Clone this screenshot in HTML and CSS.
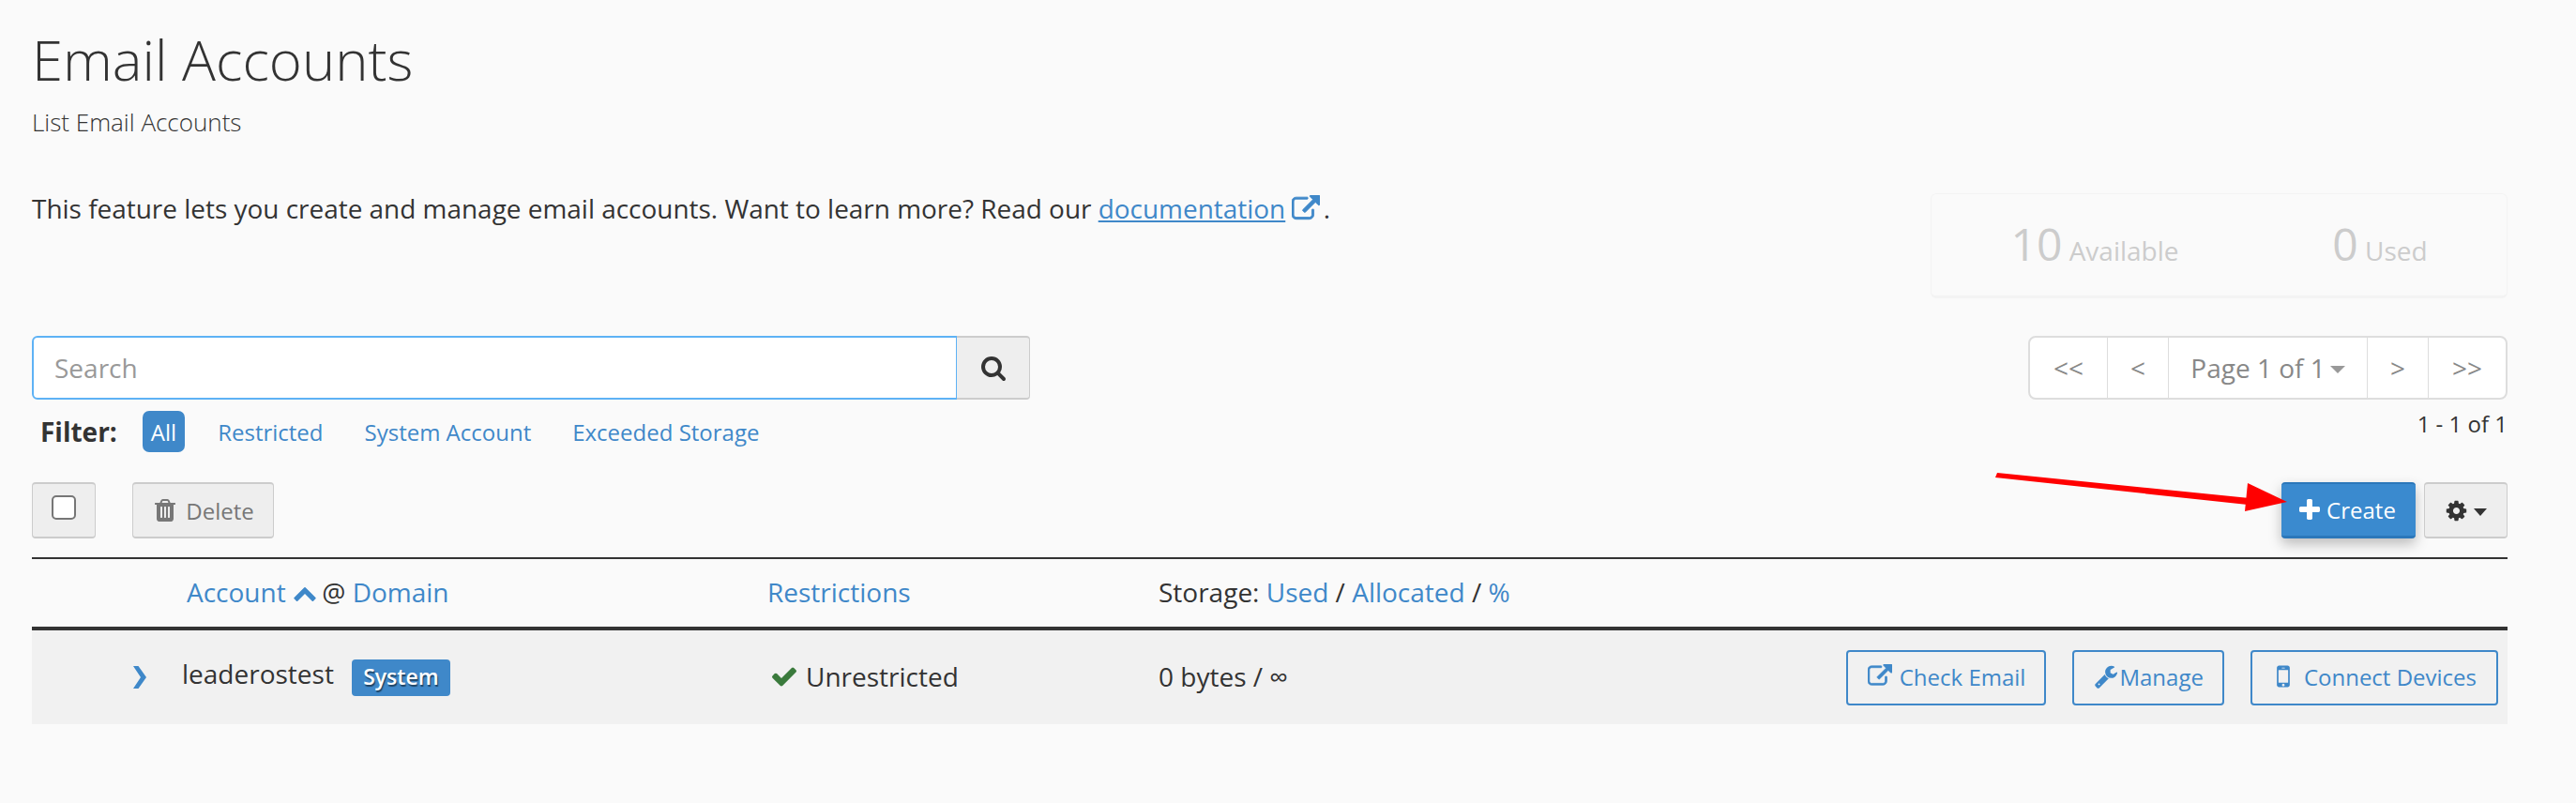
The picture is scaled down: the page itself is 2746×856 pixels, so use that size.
FILE: index.html
```html
<!doctype html>
<html>
    <head>
        <title>Email Accounts</title>
        <link rel="stylesheet" href="styles.css">
    </head>
    <body>
        <svg class="defs" width="0" height="0">
            <symbol id="i-external" viewBox="0 0 1792 1792"><path d="M1408 928v320q0 119-84.5 203.5t-203.5 84.5h-832q-119 0-203.5-84.5t-84.5-203.5v-832q0-119 84.5-203.5t203.5-84.5h704q14 0 23 9t9 23v64q0 14-9 23t-23 9h-704q-66 0-113 47t-47 113v832q0 66 47 113t113 47h832q66 0 113-47t47-113v-320q0-14 9-23t23-9h64q14 0 23 9t9 23zm384-864v512q0 26-19 45t-45 19-45-19l-176-176-652 652q-10 10-23 10t-23-10l-114-114q-10-10-10-23t10-23l652-652-176-176q-19-19-19-45t19-45 45-19h512q26 0 45 19t19 45z"/></symbol>
            <symbol id="i-search" viewBox="0 0 1792 1792"><path d="M1216 832q0-185-131.5-316.5t-316.5-131.5-316.5 131.5-131.5 316.5 131.5 316.5 316.5 131.5 316.5-131.5 131.5-316.5zm512 832q0 52-38 90t-90 38q-54 0-90-38l-343-342q-179 124-399 124-143 0-273.5-55.5t-225-150-150-225-55.5-273.5 55.5-273.5 150-225 225-150 273.5-55.5 273.5 55.5 225 150 150 225 55.5 273.5q0 220-124 399l343 343q37 37 37 90z"/></symbol>
            <symbol id="i-trash" viewBox="0 0 1792 1792"><path d="M704 1376v-704q0-14-9-23t-23-9h-64q-14 0-23 9t-9 23v704q0 14 9 23t23 9h64q14 0 23-9t9-23zm256 0v-704q0-14-9-23t-23-9h-64q-14 0-23 9t-9 23v704q0 14 9 23t23 9h64q14 0 23-9t9-23zm256 0v-704q0-14-9-23t-23-9h-64q-14 0-23 9t-9 23v704q0 14 9 23t23 9h64q14 0 23-9t9-23zm-544-992h448l-48-117q-7-9-17-11h-317q-10 2-17 11zm928 32v64q0 14-9 23t-23 9h-96v948q0 83-47 143.5t-113 60.5h-832q-66 0-113-58.5t-47-141.5v-952h-96q-14 0-23-9t-9-23v-64q0-14 9-23t23-9h309l70-167q15-37 54-63t79-26h320q40 0 79 26t54 63l70 167h309q14 0 23 9t9 23z"/></symbol>
            <symbol id="i-plus" viewBox="0 0 1792 1792"><path d="M1600 736v192q0 40-28 68t-68 28h-416v416q0 40-28 68t-68 28h-192q-40 0-68-28t-28-68v-416h-416q-40 0-68-28t-28-68v-192q0-40 28-68t68-28h416v-416q0-40 28-68t68-28h192q40 0 68 28t28 68v416h416q40 0 68 28t28 68z"/></symbol>
            <symbol id="i-cog" viewBox="0 0 1792 1792"><path d="M1152 896q0-106-75-181t-181-75-181 75-75 181 75 181 181 75 181-75 75-181zm512-109v222q0 12-8 23t-20 13l-185 28q-19 54-39 91 35 50 107 138 10 12 10 25t-9 23q-27 37-99 108t-94 71q-12 0-26-9l-138-108q-44 23-91 38-16 136-29 186-7 28-36 28h-222q-14 0-24.5-8.5t-11.5-21.5l-28-184q-49-16-90-37l-141 107q-10 9-25 9-14 0-25-11-126-114-165-168-7-10-7-23 0-12 8-23 15-21 51-66.5t54-70.5q-27-50-41-99l-183-27q-13-2-21-12.5t-8-23.5v-222q0-12 8-23t19-13l186-28q14-46 39-92-40-57-107-138-10-12-10-24 0-10 9-23 26-36 98.5-107.5t94.5-71.5q13 0 26 10l138 107q44-23 91-38 16-136 29-186 7-28 36-28h222q14 0 24.5 8.5t11.5 21.5l28 184q49 16 90 37l142-107q9-9 24-9 13 0 25 10 129 119 165 170 7 8 7 22 0 12-8 23-15 21-51 66.5t-54 70.5q26 50 41 98l183 28q13 2 21 12.5t8 23.5z"/></symbol>
            <symbol id="i-check" viewBox="0 0 1792 1792"><path d="M1671 566q0 40-28 68l-724 724-136 136q-28 28-68 28t-68-28l-136-136-362-362q-28-28-28-68t28-68l136-136q28-28 68-28t68 28l294 295 656-657q28-28 68-28t68 28l136 136q28 28 28 68z"/></symbol>
            <symbol id="i-wrench" viewBox="0 0 1792 1792"><path d="M448 1472q0-26-19-45t-45-19-45 19-19 45 19 45 45 19 45-19 19-45zm644-420l-682 682q-37 37-90 37-52 0-91-37l-106-108q-38-36-38-90 0-53 38-91l681-681q39 98 114.5 173.5t173.5 114.5zm634-435q0 39-23 106-47 134-164.5 217.5t-258.5 83.5q-185 0-316.5-131.5t-131.5-316.5 131.5-316.5 316.5-131.5q58 0 121.5 16.5t107.5 46.5q16 11 16 28t-16 28l-293 169v224l193 107q5-3 79-48.5t135.5-81 70.5-35.5q15 0 23.5 10t8.5 25z"/></symbol>
            <symbol id="i-mobile" viewBox="0 0 1792 1792"><path d="M976 1408q0-33-23.5-56.5t-56.5-23.5-56.5 23.5-23.5 56.5 23.5 56.5 56.5 23.5 56.5-23.5 23.5-56.5zm208-160v-704q0-13-9.5-22.5t-22.5-9.5h-512q-13 0-22.5 9.5t-9.5 22.5v704q0 13 9.5 22.5t22.5 9.5h512q13 0 22.5-9.5t9.5-22.5zm-192-848q0-16-16-16h-160q-16 0-16 16t16 16h160q16 0 16-16zm288-16v1024q0 52-38 90t-90 38h-512q-52 0-90-38t-38-90v-1024q0-52 38-90t90-38h512q52 0 90 38t38 90z"/></symbol>
            <symbol id="i-up" viewBox="0 0 1792 1792"><path d="M1683 1331l-166 165q-19 19-45 19t-45-19l-531-531-531 531q-19 19-45 19t-45-19l-166-165q-19-19-19-45.5t19-45.5l742-741q19-19 45-19t45 19l742 741q19 19 19 45.5t-19 45.5z"/></symbol>
            <symbol id="i-right" viewBox="0 0 16 24"><polygon points="2,0 7.5,0 16,12 7.5,24 2,24 10,12"/></symbol>
        </svg>

        <div class="page">
            <h1>Email Accounts</h1>
            <p class="subtitle">List Email Accounts</p>

            <div class="intro">
                <p class="desc">This feature lets you create and manage email accounts. Want to learn more? Read our <a href="#">documentation</a> <svg class="ico link-ico"><use href="#i-external"/></svg> .</p>
                <div class="stats">
                    <div class="stat"><b>10</b> Available</div>
                    <div class="stat"><b>0</b> Used</div>
                </div>
            </div>

            <div class="searchrow">
                <div class="search">
                    <input type="text" placeholder="Search">
                    <button class="btn searchbtn"><svg class="ico"><use href="#i-search"/></svg></button>
                </div>
                <div class="pager">
                    <span class="pg pg-first">&lt;&lt;</span>
                    <span class="pg pg-prev">&lt;</span>
                    <span class="pg pg-mid">Page 1 of 1<i class="caret"></i></span>
                    <span class="pg pg-prev">&gt;</span>
                    <span class="pg pg-first">&gt;&gt;</span>
                </div>
            </div>

            <div class="filterrow">
                <div class="filters">
                    <b>Filter:</b>
                    <a class="pill" href="#">All</a>
                    <a href="#">Restricted</a>
                    <a href="#">System Account</a>
                    <a href="#">Exceeded Storage</a>
                </div>
                <div class="count">1 - 1 of 1</div>
            </div>

            <div class="toolbar">
                <div class="tools">
                    <button class="btn checkbtn"><span class="box"></span></button>
                    <button class="btn delbtn"><svg class="ico"><use href="#i-trash"/></svg>Delete</button>
                </div>
                <div class="tools tools-right">
                    <button class="btn create"><svg class="ico"><use href="#i-plus"/></svg>Create</button>
                    <button class="btn gear"><svg class="ico"><use href="#i-cog"/></svg><i class="caret dark"></i></button>
                </div>
            </div>

            <div class="thead">
                <div></div>
                <div><a href="#">Account</a> <svg class="ico sort"><use href="#i-up"/></svg> @ <a href="#">Domain</a></div>
                <div><a href="#">Restrictions</a></div>
                <div>Storage: <a href="#">Used</a> / <a href="#">Allocated</a> / <a href="#">%</a></div>
            </div>
            <div class="trow">
                <div><svg class="ico chev"><use href="#i-right"/></svg></div>
                <div class="acct"><span class="acct-name">leaderostest</span> <span class="badge">System</span></div>
                <div class="restr"><svg class="ico ok"><use href="#i-check"/></svg>Unrestricted</div>
                <div class="usage">0 bytes / ∞</div>
                <div class="actions">
                    <a class="outline" href="#"><svg class="ico bold"><use href="#i-external"/></svg>Check Email</a>
                    <a class="outline manage" href="#"><svg class="ico"><use href="#i-wrench"/></svg>Manage</a>
                    <a class="outline connect" href="#"><svg class="ico"><use href="#i-mobile"/></svg>Connect Devices</a>
                </div>
            </div>

            <svg class="arrow" width="330" height="50" viewBox="0 0 330 50">
                <path d="M3 1 L272 28 L270 35 L1 6 Z" fill="#f00"/>
                <polygon points="270,12 312,32 267,42" fill="#f00"/>
            </svg>
        </div>
    </body>
</html>
```

FILE: styles.css
```css
*{
    margin: 0;
    padding: 0;
    box-sizing: border-box;
}
body{
    background: #fafafa;
    color: #333;
    font-family: "Open Sans", "Liberation Sans", sans-serif;
    font-size: 28px;
}
a{
    color: #3f88c9;
    text-decoration: none;
}
.defs{
    position: absolute;
}
.ico{
    width: 1em;
    height: 1em;
    fill: currentColor;
    flex: none;
}
.ico.bold{
    stroke: currentColor;
    stroke-width: 50;
}
.page{
    position: relative;
    padding: 22px 73px 0 34px;
    height: 856px;
    overflow: hidden;
}
h1{
    font-size: 59.8px;
    font-weight: 300;
    line-height: 82px;
}
.subtitle{
    font-weight: 300;
    font-size: 26px;
    line-height: 36px;
    margin-top: 8px;
}

.intro{
    display: flex;
    justify-content: space-between;
    align-items: flex-start;
    margin-top: 1px;
}
.desc{
    margin-top: 54px;
    line-height: 38px;
    font-size: 27.95px;
}
.desc a{
    text-decoration: underline;
}
.link-ico{
    width: 30px;
    height: 30px;
    color: #3f88c9;
    vertical-align: -5px;
    margin: 0 -3px 0 -1px;
    stroke: currentColor;
    stroke-width: 50;
}
.stats{
    width: 615px;
    height: 112px;
    margin-top: 57px;
    padding-left: 22px;
    padding-bottom: 4px;
    display: grid;
    grid-template-columns: 304px 304px;
    align-items: center;
    justify-items: center;
    border: 1px solid #f3f3f3;
    border-bottom-width: 3px;
    border-radius: 6px;
    color: #ccc;
    font-size: 28px;
}
.stat{
    white-space: nowrap;
}
.stat b{
    font-weight: 400;
    font-size: 48px;
}

.searchrow{
    display: flex;
    justify-content: space-between;
    margin-top: 40px;
}
.search{
    display: flex;
    height: 68px;
}
.search input{
    width: 986px;
    height: 68px;
    border: 2px solid #5eb2f5;
    border-right-width: 1px;
    border-radius: 6px 0 0 6px;
    padding: 0 22px;
    background: #fff;
    font: 400 28px "Open Sans", sans-serif;
    color: #333;
    outline: none;
}
.search input::placeholder{
    color: #999;
}
.btn{
    display: flex;
    align-items: center;
    justify-content: center;
    background: #eee;
    border: 1px solid #ccc;
    border-bottom-width: 2px;
    border-top-width: 2px;
    border-radius: 4px;
    font: 400 24px "Open Sans", sans-serif;
    color: #777;
}
.searchbtn{
    width: 78px;
    border-radius: 0 4px 4px 0;
    border-left: none;
    color: #333;
    font-size: 28px;
}
.pager{
    display: flex;
    width: 511px;
    height: 68px;
    background: #fff;
    border: 2px solid #ddd;
    border-radius: 8px;
    color: #888;
    font-size: 28px;
}
.pg{
    display: flex;
    align-items: center;
    justify-content: center;
    border-left: 1px solid #ddd;
    border-right: 1px solid #ddd;
    width: 66px;
}
.pg-first{
    width: 82px;
    border: none;
}
.pg-mid{
    flex: 1;
    border: none;
}
.caret{
    display: inline-block;
    margin-left: 5px;
    margin-top: 3px;
    border-top: 8px solid #999;
    border-left: 8px solid transparent;
    border-right: 8px solid transparent;
}
.caret.dark{
    border-top-color: #333;
    margin-left: 6px;
    border-top-width: 8px;
    border-left-width: 7px;
    border-right-width: 7px;
}

.filterrow{
    display: flex;
    justify-content: space-between;
    align-items: flex-start;
    margin-top: 12px;
    font-size: 24px;
}
.filters{
    display: flex;
    align-items: center;
    height: 44px;
    padding-left: 9px;
    gap: 35px;
}
.filters b{
    font-weight: 700;
    font-size: 28px;
    margin-right: -8px;
}
.filters a + a + a{
    margin-left: 9px;
}
.pill{
    display: flex;
    align-items: center;
    height: 44px;
    padding: 0 9px;
    border-radius: 7px;
    background: #3f88c9;
    color: #fff;
}
.count{
    line-height: 28px;
    color: #333;
}

.toolbar{
    display: flex;
    justify-content: space-between;
    align-items: flex-start;
    margin-top: 32px;
}
.tools{
    display: flex;
    gap: 39px;
}
.tools-right{
    gap: 9px;
}
.tools .btn{
    height: 60px;
}
.checkbtn{
    width: 68px;
    padding-bottom: 6px;
}
.box{
    width: 26px;
    height: 26px;
    background: #fff;
    border: 2px solid #767676;
    border-radius: 5px;
}
.delbtn{
    width: 151px;
    gap: 8px;
}
.delbtn .ico{
    width: 28px;
    height: 28px;
}
.btn.create{
    width: 143px;
    background: #3a8acf;
    color: #fff;
    gap: 4px;
    padding-right: 5px;
    border: none;
    border-top: 2px solid #2b77ba;
    border-bottom: 3px solid #2b77ba;
    box-shadow: 0 6px 14px rgba(0, 0, 0, .25);
}
.create .ico{
    width: 28px;
    height: 28px;
}
.gear{
    width: 89px;
    color: #333;
}
.gear .ico{
    width: 25px;
    height: 25px;
}

.thead, .trow{
    display: grid;
    align-items: center;
}
.thead{
    grid-template-columns: 165px 619px 417px 1fr;
    height: 78px;
    margin-top: 20px;
    padding-bottom: 2px;
    border-top: 2px solid #333;
    border-bottom: 4px solid #333;
}
.sort{
    width: 26px;
    height: 26px;
    color: #3f88c9;
    vertical-align: -3px;
    margin-right: -2px;
}
.trow{
    grid-template-columns: 160px 626px 415px 300px 1fr;
    height: 100px;
    background: #f1f1f1;
}
.chev{
    display: block;
    margin-left: 106px;
    width: 16px;
    height: 24px;
    color: #3f88c9;
}
.acct-name{
    position: relative;
    top: -3px;
}
.badge{
    display: inline-block;
    vertical-align: 2px;
    margin-left: 12px;
    padding: 0 12px;
    height: 39px;
    line-height: 37px;
    border-radius: 4px;
    background: #3f88c9;
    color: #fff;
    font-size: 23px;
    font-weight: 600;
    text-shadow: 1px 2px 1px rgba(0, 0, 0, .5);
}
.restr{
    display: flex;
    align-items: center;
    gap: 8px;
    padding-bottom: 2px;
}
.usage{
    padding-bottom: 2px;
}
.ok{
    width: 30px;
    height: 30px;
    margin-left: 1px;
    color: #3a7a3c;
}
.actions{
    display: flex;
    justify-content: flex-end;
    gap: 28px;
    padding-right: 10px;
}
.outline{
    display: flex;
    align-items: center;
    gap: 8px;
    height: 59px;
    padding: 0 20px 2px 21px;
    border: 2px solid #3f88c9;
    border-radius: 4px;
    font-size: 24px;
}
.outline .ico{
    width: 26px;
    height: 26px;
}
.manage{
    gap: 1px;
}
.connect{
    gap: 6px;
    padding-left: 17px;
    padding-right: 21px;
}
.outline.connect .ico{
    width: 32px;
    height: 32px;
}

.arrow{
    position: absolute;
    left: 2126px;
    top: 503px;
}
```
